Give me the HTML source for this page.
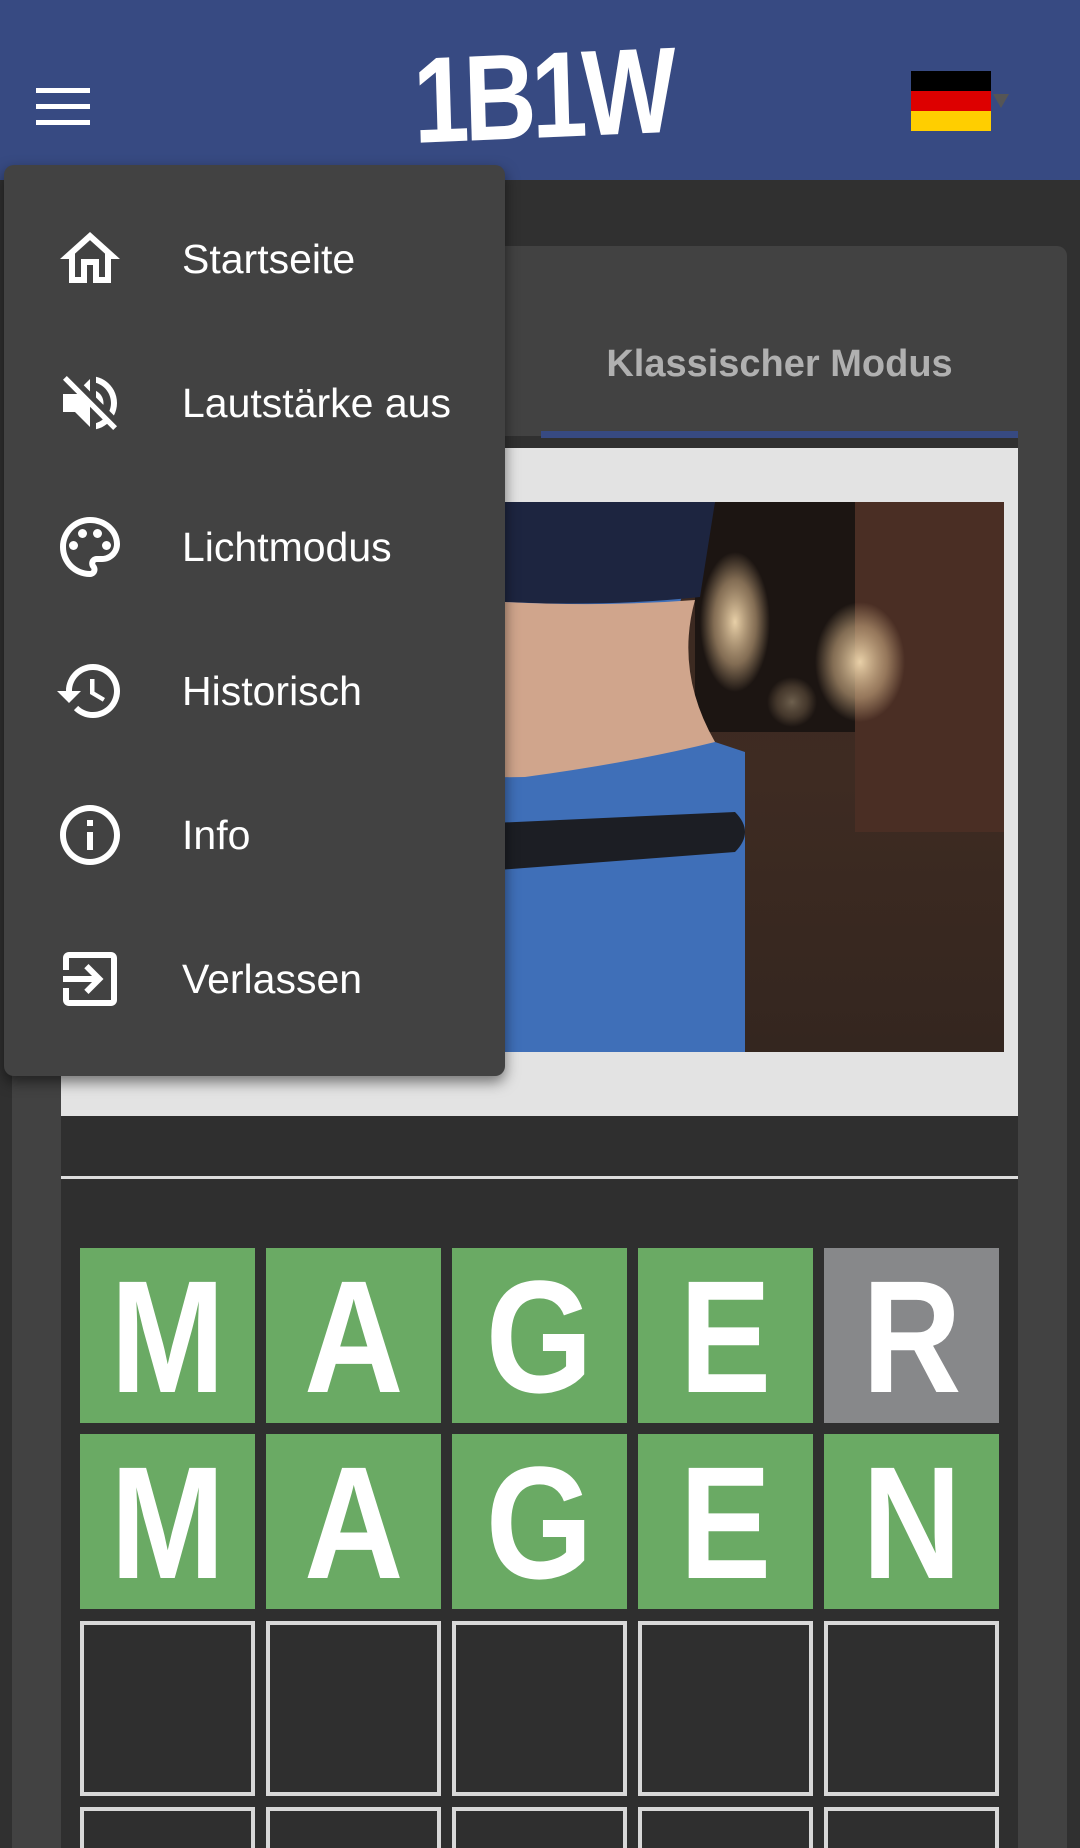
<!DOCTYPE html>
<html style="width:1080px;height:1848px;overflow:hidden"><head><meta charset="utf-8"><style>
*{margin:0;padding:0;box-sizing:border-box}
body{width:1080px;height:1848px;background:#303030;position:relative;overflow:hidden;font-family:"Liberation Sans",Roboto,sans-serif}
.hdr{position:absolute;left:0;top:0;width:1080px;height:180px;background:#374a82}
.ham{position:absolute;left:36px;width:54px;height:5px;background:#fff}
.logo{position:absolute;left:388px;top:26px;width:280px;text-align:center;color:#fff;font:bold 122px "Liberation Sans Narrow","Liberation Sans",sans-serif;transform:scaleX(.82) rotate(-2deg);letter-spacing:-6px}
.card{position:absolute;left:12px;top:246px;width:1055px;height:1602px;background:#424242;border-radius:10px 10px 0 0}
.tab{position:absolute;left:541px;top:343px;width:477px;text-align:center;color:#b0b0b0;font-size:38px;font-weight:bold}
.menu{position:absolute;left:4px;top:165px;width:501px;height:911px;background:#424242;border-radius:10px;box-shadow:0 6px 14px rgba(0,0,0,.5)}
.item{position:absolute;left:0;height:80px;width:501px}
.item svg{position:absolute;left:50px;top:4px}
.item span{position:absolute;left:178px;top:17px;color:#fff;font-size:41px}
.tile{position:absolute;width:175px;height:175px;color:#fff;font-weight:bold;font-size:160px;text-align:center;line-height:178px;overflow:hidden}
.tile b{display:inline-block;transform:scaleX(.86)}
.g{background:#6aaa64}.x{background:#87888a}
.e{border:4px solid #d8d8d8;background:#2f2f2f}
</style></head><body>
<div class="hdr">
<div class="ham" style="top:88px"></div><div class="ham" style="top:104px"></div><div class="ham" style="top:120px"></div>
<div class="logo">1B1W</div>
<div style="position:absolute;left:911px;top:71px;width:80px;height:20px;background:#000"></div>
<div style="position:absolute;left:911px;top:91px;width:80px;height:20px;background:#dd0000"></div>
<div style="position:absolute;left:911px;top:111px;width:80px;height:20px;background:#ffce00"></div>
<div style="position:absolute;left:993px;top:94px;width:0;height:0;border-left:8px solid transparent;border-right:8px solid transparent;border-top:14px solid #555"></div>
</div>
<div class="card"></div>
<div class="tab">Klassischer Modus</div>
<div style="position:absolute;left:61px;top:436px;width:957px;height:12px;background:#303030"></div>
<div style="position:absolute;left:541px;top:431px;width:477px;height:7px;background:#374a82"></div>
<div style="position:absolute;left:61px;top:448px;width:957px;height:668px;background:#e3e3e3"></div>
<svg style="position:absolute;left:75px;top:502px" width="929" height="550" viewBox="0 0 929 550">
<defs><radialGradient id="b1"><stop offset="0" stop-color="#e8d0a8"/><stop offset=".6" stop-color="#c8a880" stop-opacity=".6"/><stop offset="1" stop-color="#c8a880" stop-opacity="0"/></radialGradient>
<linearGradient id="bg" x1="0" y1="0" x2="0" y2="1"><stop offset="0" stop-color="#3a2820"/><stop offset=".5" stop-color="#3e2b22"/><stop offset="1" stop-color="#34261f"/></linearGradient></defs>
<rect width="929" height="550" fill="url(#bg)"/>
<rect x="780" y="0" width="149" height="330" fill="#4a2e24"/>
<rect x="620" y="0" width="160" height="230" fill="#1c1512"/>
<ellipse cx="660" cy="120" rx="35" ry="70" fill="url(#b1)"/>
<ellipse cx="785" cy="160" rx="45" ry="60" fill="url(#b1)"/>
<ellipse cx="717" cy="200" rx="25" ry="25" fill="url(#b1)" opacity=".4"/>
<path d="M0 0H640Q620 60 605 100Q600 180 640 240L670 250V550H0Z" fill="#3f6fb8"/>
<path d="M0 0H640L625 95Q530 105 430 100H0Z" fill="#1d2540"/>
<path d="M0 100H430Q530 105 620 98Q600 170 640 240Q560 260 450 275L0 280Z" fill="#d0a58c"/>
<path d="M0 340L660 310Q680 330 660 350L0 400Z" fill="#1c1e24"/>
</svg>
<div style="position:absolute;left:61px;top:1116px;width:957px;height:732px;background:#2f2f2f"></div>
<div style="position:absolute;left:61px;top:1176px;width:957px;height:3px;background:#ddd"></div>
<div class="tile g" style="left:80px;top:1248px"><b>M</b></div>
<div class="tile g" style="left:266px;top:1248px"><b>A</b></div>
<div class="tile g" style="left:452px;top:1248px"><b>G</b></div>
<div class="tile g" style="left:638px;top:1248px"><b>E</b></div>
<div class="tile x" style="left:824px;top:1248px"><b>R</b></div>
<div class="tile g" style="left:80px;top:1434px"><b>M</b></div>
<div class="tile g" style="left:266px;top:1434px"><b>A</b></div>
<div class="tile g" style="left:452px;top:1434px"><b>G</b></div>
<div class="tile g" style="left:638px;top:1434px"><b>E</b></div>
<div class="tile g" style="left:824px;top:1434px"><b>N</b></div>
<div class="tile e" style="left:80px;top:1621px"></div>
<div class="tile e" style="left:266px;top:1621px"></div>
<div class="tile e" style="left:452px;top:1621px"></div>
<div class="tile e" style="left:638px;top:1621px"></div>
<div class="tile e" style="left:824px;top:1621px"></div>
<div class="tile e" style="left:80px;top:1807px;height:41px;border-bottom:none"></div>
<div class="tile e" style="left:266px;top:1807px;height:41px;border-bottom:none"></div>
<div class="tile e" style="left:452px;top:1807px;height:41px;border-bottom:none"></div>
<div class="tile e" style="left:638px;top:1807px;height:41px;border-bottom:none"></div>
<div class="tile e" style="left:824px;top:1807px;height:41px;border-bottom:none"></div>
<div class="menu">
<div class="item" style="top:54px"><svg width="72" height="72" viewBox="0 0 24 24" fill="#fff"><path d="M12 5.69l5 4.5V18h-2v-6H9v6H7v-7.81l5-4.5M12 3L2 12h3v8h6v-6h2v6h6v-8h3L12 3z"/></svg><span>Startseite</span></div>
<div class="item" style="top:198px"><svg width="72" height="72" viewBox="0 0 24 24" fill="#fff"><path d="M16.5 12c0-1.77-1.02-3.29-2.5-4.03v2.21l2.45 2.45c.03-.2.05-.41.05-.63zm2.5 0c0 .94-.2 1.82-.54 2.64l1.51 1.51C20.63 14.91 21 13.5 21 12c0-4.28-2.99-7.86-7-8.77v2.06c2.89.86 5 3.54 5 6.71zM4.27 3L3 4.27 7.73 9H3v6h4l5 5v-6.73l4.25 4.25c-.67.52-1.42.93-2.25 1.18v2.06c1.38-.31 2.63-.95 3.69-1.81L19.73 21 21 19.73l-9-9L4.27 3zM12 4L9.91 6.09 12 8.18V4z"/></svg><span>Lautstärke aus</span></div>
<div class="item" style="top:342px"><svg width="72" height="72" viewBox="0 0 24 24" fill="#fff"><path d="M12 22C6.49 22 2 17.51 2 12S6.49 2 12 2s10 4.04 10 9c0 3.31-2.69 6-6 6h-1.77c-.28 0-.5.22-.5.5 0 .12.05.23.13.33.41.47.64 1.06.64 1.67 0 1.38-1.12 2.5-2.5 2.5zm0-18c-4.41 0-8 3.59-8 8s3.59 8 8 8c.28 0 .5-.22.5-.5 0-.16-.08-.28-.14-.35-.41-.46-.63-1.05-.63-1.65 0-1.38 1.12-2.5 2.5-2.5H16c2.21 0 4-1.79 4-4 0-3.86-3.59-7-8-7z"/><circle cx="6.5" cy="11.5" r="1.5"/><circle cx="9.5" cy="7.5" r="1.5"/><circle cx="14.5" cy="7.5" r="1.5"/><circle cx="17.5" cy="11.5" r="1.5"/></svg><span>Lichtmodus</span></div>
<div class="item" style="top:486px"><svg width="72" height="72" viewBox="0 0 24 24" fill="#fff"><path d="M13 3c-4.97 0-9 4.030-9 9H1l3.89 3.89.07.14L9 12H6c0-3.87 3.13-7 7-7s7 3.13 7 7-3.13 7-7 7c-1.93 0-3.68-.79-4.94-2.06l-1.42 1.42C8.27 19.99 10.51 21 13 21c4.97 0 9-4.03 9-9s-4.03-9-9-9zm-1 5v5l4.28 2.54.72-1.21-3.5-2.08V8H12z"/></svg><span>Historisch</span></div>
<div class="item" style="top:630px"><svg width="72" height="72" viewBox="0 0 24 24" fill="#fff"><path d="M11 7h2v2h-2zm0 4h2v6h-2zm1-9C6.48 2 2 6.48 2 12s4.48 10 10 10 10-4.48 10-10S17.52 2 12 2zm0 18c-4.41 0-8-3.59-8-8s3.59-8 8-8 8 3.59 8 8-3.59 8-8 8z"/></svg><span>Info</span></div>
<div class="item" style="top:774px"><svg width="72" height="72" viewBox="0 0 24 24" fill="#fff"><path d="M10.09 15.59L11.5 17l5-5-5-5-1.41 1.41L12.67 11H3v2h9.67l-2.58 2.59zM19 3H5c-1.11 0-2 .9-2 2v4h2V5h14v14H5v-4H3v4c0 1.1.89 2 2 2h14c1.1 0 2-.9 2-2V5c0-1.1-.9-2-2-2z"/></svg><span>Verlassen</span></div>
</div>
</body></html>
